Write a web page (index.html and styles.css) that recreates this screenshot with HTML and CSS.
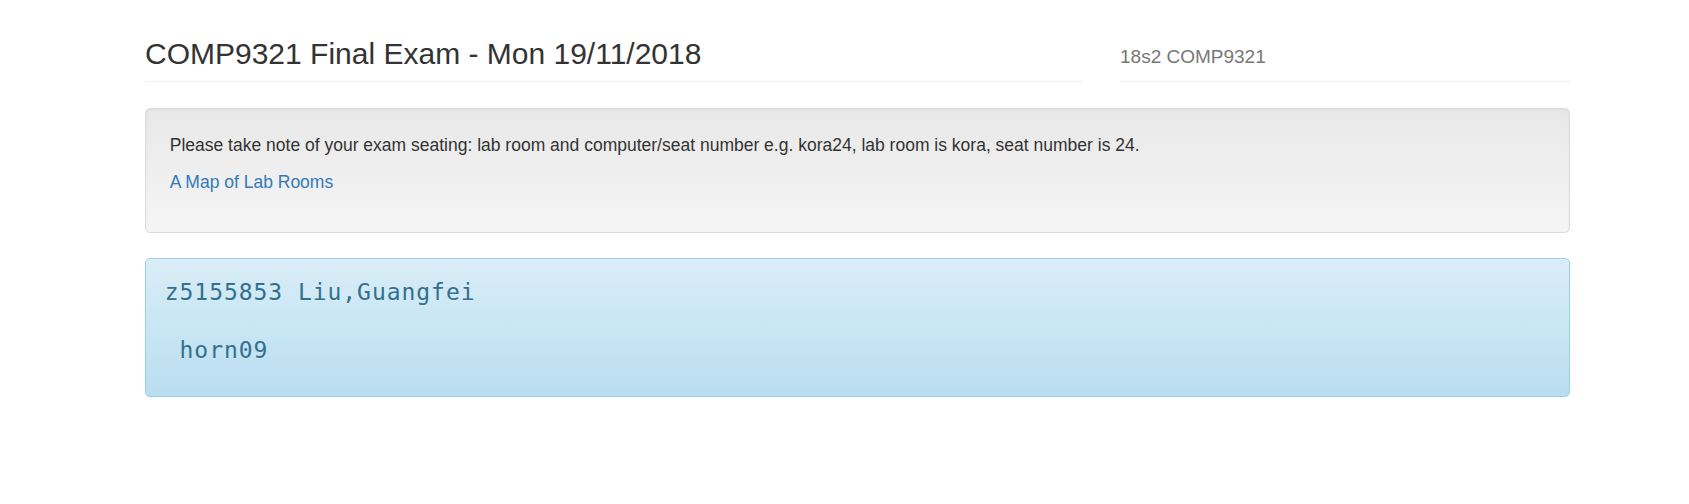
FILE: index.html
```html
<!DOCTYPE html>
<html lang="en">
<head>
<meta charset="utf-8">
<title>COMP9321 Final Exam</title>
<link rel="stylesheet" href="styles.css">
</head>
<body>
<div class="container">
  <div class="header-row">
    <div class="col-main">
      <h1 class="title">COMP9321 Final Exam - Mon 19/11/2018</h1>
    </div>
    <div class="col-side">
      <span class="course">18s2 COMP9321</span>
    </div>
  </div>
  <div class="well">
    <p>Please take note of your exam seating: lab room and computer/seat number e.g. kora24, lab room is kora, seat number is 24.</p>
    <p><a href="#" class="link">A Map of Lab Rooms</a></p>
  </div>
  <div class="alert-info">
    <p class="seat-line seat-name">z5155853 Liu,Guangfei</p>
    <p class="seat-line seat-room">&nbsp;horn09</p>
  </div>
</div>
</body>
</html>
```
FILE: styles.css
```css
html, body {
  margin: 0;
  padding: 0;
  background: #fff;
}
body {
  font-family: "Liberation Sans", Arial, sans-serif;
  font-size: 17.5px;
  line-height: 25px;
  color: #333;
}
.container {
  width: 1425px;
  margin-left: 145px;
}
.header-row {
  display: flex;
  gap: 37.5px;
  padding-top: 36.5px;
}
.col-main {
  width: 937.5px;
  border-bottom: 1px solid #eee;
  padding-bottom: 11.25px;
}
.title {
  margin: 0;
  font-size: 30px;
  line-height: 33px;
  font-weight: 500;
  color: #333;
}
.col-side {
  width: 450px;
  border-bottom: 1px solid #eee;
  padding-bottom: 12px;
  display: flex;
  align-items: flex-end;
}
.course {
  font-size: 19px;
  line-height: 25px;
  color: #777;
}
.well {
  margin-top: 26px;
  padding: 23.75px 23.75px 24.75px;
  border: 1px solid #dcdcdc;
  border-radius: 5px;
  background: linear-gradient(to bottom, #e8e8e8 0, #f5f5f5 100%);
  box-shadow: inset 0 1px 3px rgba(0,0,0,.05), 0 1px 0 rgba(255,255,255,.1);
}
.well p {
  margin: 0 0 12.5px;
}
.link {
  color: #337ab7;
  text-decoration: none;
}
.alert-info {
  margin-top: 24.5px;
  padding: 19.5px 18.75px 18.75px;
  border: 1px solid #9acfea;
  border-radius: 5px;
  background: linear-gradient(to bottom, #d9edf7 0, #b9def0 100%);
  box-shadow: inset 0 1px 0 rgba(255,255,255,.25), 0 1px 2px rgba(0,0,0,.05);
  color: #31708f;
  text-shadow: 0 1px 0 rgba(255,255,255,.2);
}
.seat-line {
  margin: 0;
  font-family: "DejaVu Sans Mono", "Liberation Mono", monospace;
  font-size: 23px;
  letter-spacing: 0.95px;
  line-height: 28.75px;
  white-space: pre;
}
.seat-name {
  margin-bottom: 28.75px;
}
.seat-room {
  margin-bottom: 12.5px;
}
```
